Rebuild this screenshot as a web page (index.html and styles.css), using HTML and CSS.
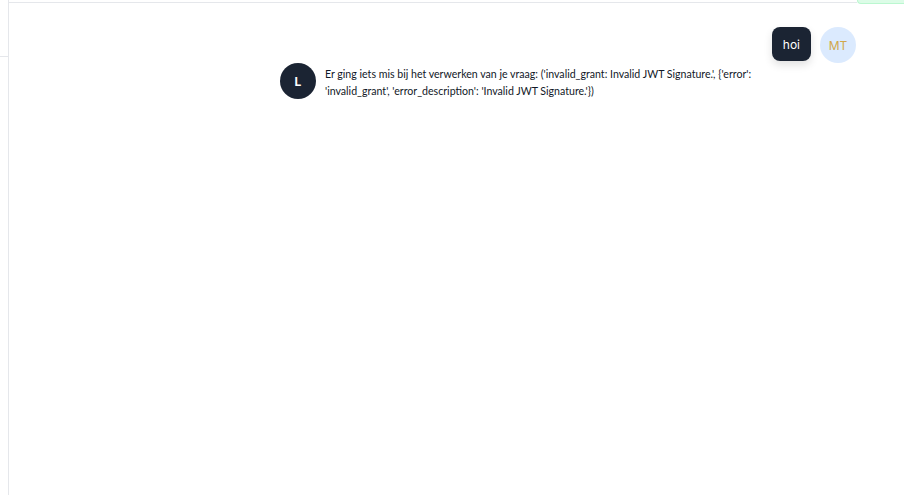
FILE: index.html
```html
<!DOCTYPE html>
<html>
<head>
<meta charset="utf-8">
<link rel="stylesheet" href="styles.css">
</head>
<body>
<div class="app">
  <aside class="side">
    <div class="side-head"></div>
  </aside>
  <main class="main">
    <div class="topbar">
      <div class="topbar-line"></div>
      <div class="badge"></div>
    </div>
    <div class="chat">
      <div class="row user">
        <div class="bubble">hoi</div>
        <div class="avatar me">MT</div>
      </div>
      <div class="row bot">
        <div class="avatar bot-av">L</div>
        <div class="text">Er ging iets mis bij het verwerken van je vraag: ('invalid_grant: Invalid JWT Signature.', {'error': 'invalid_grant', 'error_description': 'Invalid JWT Signature.'})</div>
      </div>
    </div>
  </main>
</div>
</body>
</html>
```
FILE: styles.css
```css
html, body {
  margin: 0;
  padding: 0;
  background: #ffffff;
  font-family: "Lato", "Noto Sans", sans-serif;
}
.app {
  display: flex;
  height: 495px;
  overflow: hidden;
}
.side {
  width: 8px;
  flex: none;
  border-right: 1px solid #e5e7eb;
}
.side-head {
  height: 56px;
  border-bottom: 1px solid #e5e7eb;
}
.main {
  flex: 1;
  display: flex;
  flex-direction: column;
}
.topbar {
  display: flex;
  height: 3px;
}
.topbar-line {
  flex: 1;
  height: 2px;
  border-bottom: 1px solid #e5e7eb;
}
.badge {
  width: 46px;
  height: 3px;
  background: #dcfce7;
  border-left: 1px solid #bbf7d0;
  border-bottom: 1px solid #bbf7d0;
  border-bottom-left-radius: 4px;
}
.chat {
  display: flex;
  flex-direction: column;
  padding-top: 24px;
}
.row {
  display: flex;
}
.user {
  justify-content: flex-end;
  align-items: flex-start;
  gap: 9px;
  padding-right: 48px;
}
.bubble {
  height: 34px;
  padding: 0 11px;
  display: flex;
  align-items: center;
  background: #1b2433;
  color: #ffffff;
  font-size: 12px;
  border-radius: 8px;
  box-shadow: 0 4px 8px rgba(0, 0, 0, 0.12);
  font-family: "Inter", "Noto Sans", sans-serif;
}
.avatar {
  width: 36px;
  height: 36px;
  border-radius: 50%;
  display: flex;
  align-items: center;
  justify-content: center;
  font-size: 12px;
  flex: none;
  font-family: "Inter", "Noto Sans", sans-serif;
}
.me {
  background: #dbeafe;
  color: #d1a74a;
}
.bot {
  padding-left: 271px;
  gap: 9px;
}
.bot-av {
  background: #1b2433;
  color: #ffffff;
  font-weight: 700;
}
.text {
  width: 440px;
  font-size: 10.6px;
  line-height: 17px;
  color: #111827;
  padding-top: 3px;
}
```
